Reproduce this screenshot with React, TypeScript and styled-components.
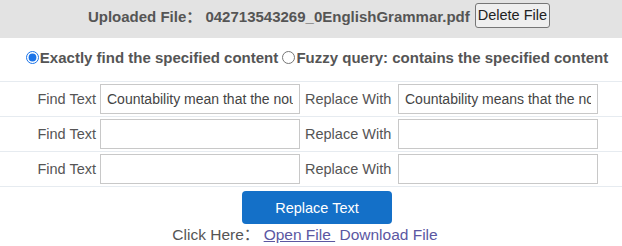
import React from "react";
import styled, { createGlobalStyle } from "styled-components";

const FONT = `"Liberation Sans", Arial, "Noto Sans CJK SC", sans-serif`;

const GlobalStyle = createGlobalStyle`
  html, body { margin: 0; padding: 0; background: #fff; }
  body { font-family: ${FONT}; color: #555; }
`;

const Page = styled.div`
  width: 622px;
`;

const Header = styled.div`
  box-sizing: border-box;
  height: 38px;
  padding: 0 0 8px 16px;
  background: #e3e3e3;
  display: flex;
  align-items: center;
  justify-content: center;
  font-weight: bold;
  font-size: 15px;
  color: #555;
`;

const PlainButton = styled.button`
  margin-left: 5px;
  font-family: ${FONT};
  font-size: 14.5px;
  font-weight: normal;
  color: #222;
  background: #efefef;
  border: 1px solid #767676;
  border-radius: 3px;
  height: 25px;
  padding: 0 2px;
`;

const RadioRow = styled.div`
  box-sizing: border-box;
  height: 43px;
  padding: 0 0 5px 12px;
  display: flex;
  align-items: center;
  justify-content: center;
  font-weight: bold;
  font-size: 15px;
  color: #555;
  white-space: nowrap;
`;

const RadioLabel = styled.label`
  display: flex;
  align-items: center;
  input {
    margin: 0 1px 0 0;
    width: 13px;
    height: 13px;
    accent-color: #1a73e8;
  }
`;

const Table = styled.div`
  border-top: 1px solid #e6ebf0;
`;

const Row = styled.div`
  display: grid;
  grid-template-columns: 100px 203px 95px 200px;
  align-items: center;
  height: 34px;
  border-bottom: 1px solid #e6ebf0;
  font-size: 14.5px;
  color: #555;
`;

const Label = styled.span<{ $align: "left" | "right" }>`
  text-align: ${(p) => p.$align};
  padding-right: ${(p) => (p.$align === "right" ? "4px" : "0")};
  padding-left: ${(p) => (p.$align === "left" ? "2px" : "0")};
`;

const TextInput = styled.input`
  box-sizing: border-box;
  width: 200px;
  height: 30px;
  border: 1px solid #c8c8c8;
  padding: 0 6px;
  font-family: ${FONT};
  font-size: 14px;
  color: #444;
  outline: none;
`;

const Actions = styled.div`
  display: flex;
  flex-direction: column;
  align-items: center;
  padding: 4px 0 0 12px;
`;

const PrimaryButton = styled.button`
  width: 150px;
  height: 33px;
  background: #1470c8;
  color: #fff;
  border: none;
  border-radius: 4px;
  font-family: ${FONT};
  font-size: 14.5px;
`;

const LinkLine = styled.div`
  font-size: 15.5px;
  line-height: 17px;
  color: #555;
  margin: 2px 24px 0 0;
`;

const Link = styled.a<{ $underline?: boolean }>`
  color: #5b57a2;
  text-decoration: ${(p) => (p.$underline ? "underline" : "none")};
`;

export default function App() {
  const rows = [
    { find: "Countability mean that the noun", replace: "Countability means that the noun" },
    { find: "", replace: "" },
    { find: "", replace: "" },
  ];
  return (
    <Page>
      <GlobalStyle />
      <Header>
        <span>Uploaded File： 042713543269_0EnglishGrammar.pdf</span>
        <PlainButton>Delete File</PlainButton>
      </Header>
      <RadioRow>
        <RadioLabel>
          <input type="radio" name="mode" defaultChecked />
          Exactly find the specified content
        </RadioLabel>
        &nbsp;
        <RadioLabel>
          <input type="radio" name="mode" />
          Fuzzy query: contains the specified content
        </RadioLabel>
      </RadioRow>
      <Table>
        {rows.map((r, i) => (
          <Row key={i}>
            <Label $align="right">Find Text</Label>
            <TextInput defaultValue={r.find} />
            <Label $align="left">Replace With</Label>
            <TextInput defaultValue={r.replace} />
          </Row>
        ))}
      </Table>
      <Actions>
        <PrimaryButton>Replace Text</PrimaryButton>
        <LinkLine>
          Click Here： <Link href="#" $underline>Open File&nbsp;</Link>{" "}
          <Link href="#">Download File</Link>
        </LinkLine>
      </Actions>
    </Page>
  );
}
